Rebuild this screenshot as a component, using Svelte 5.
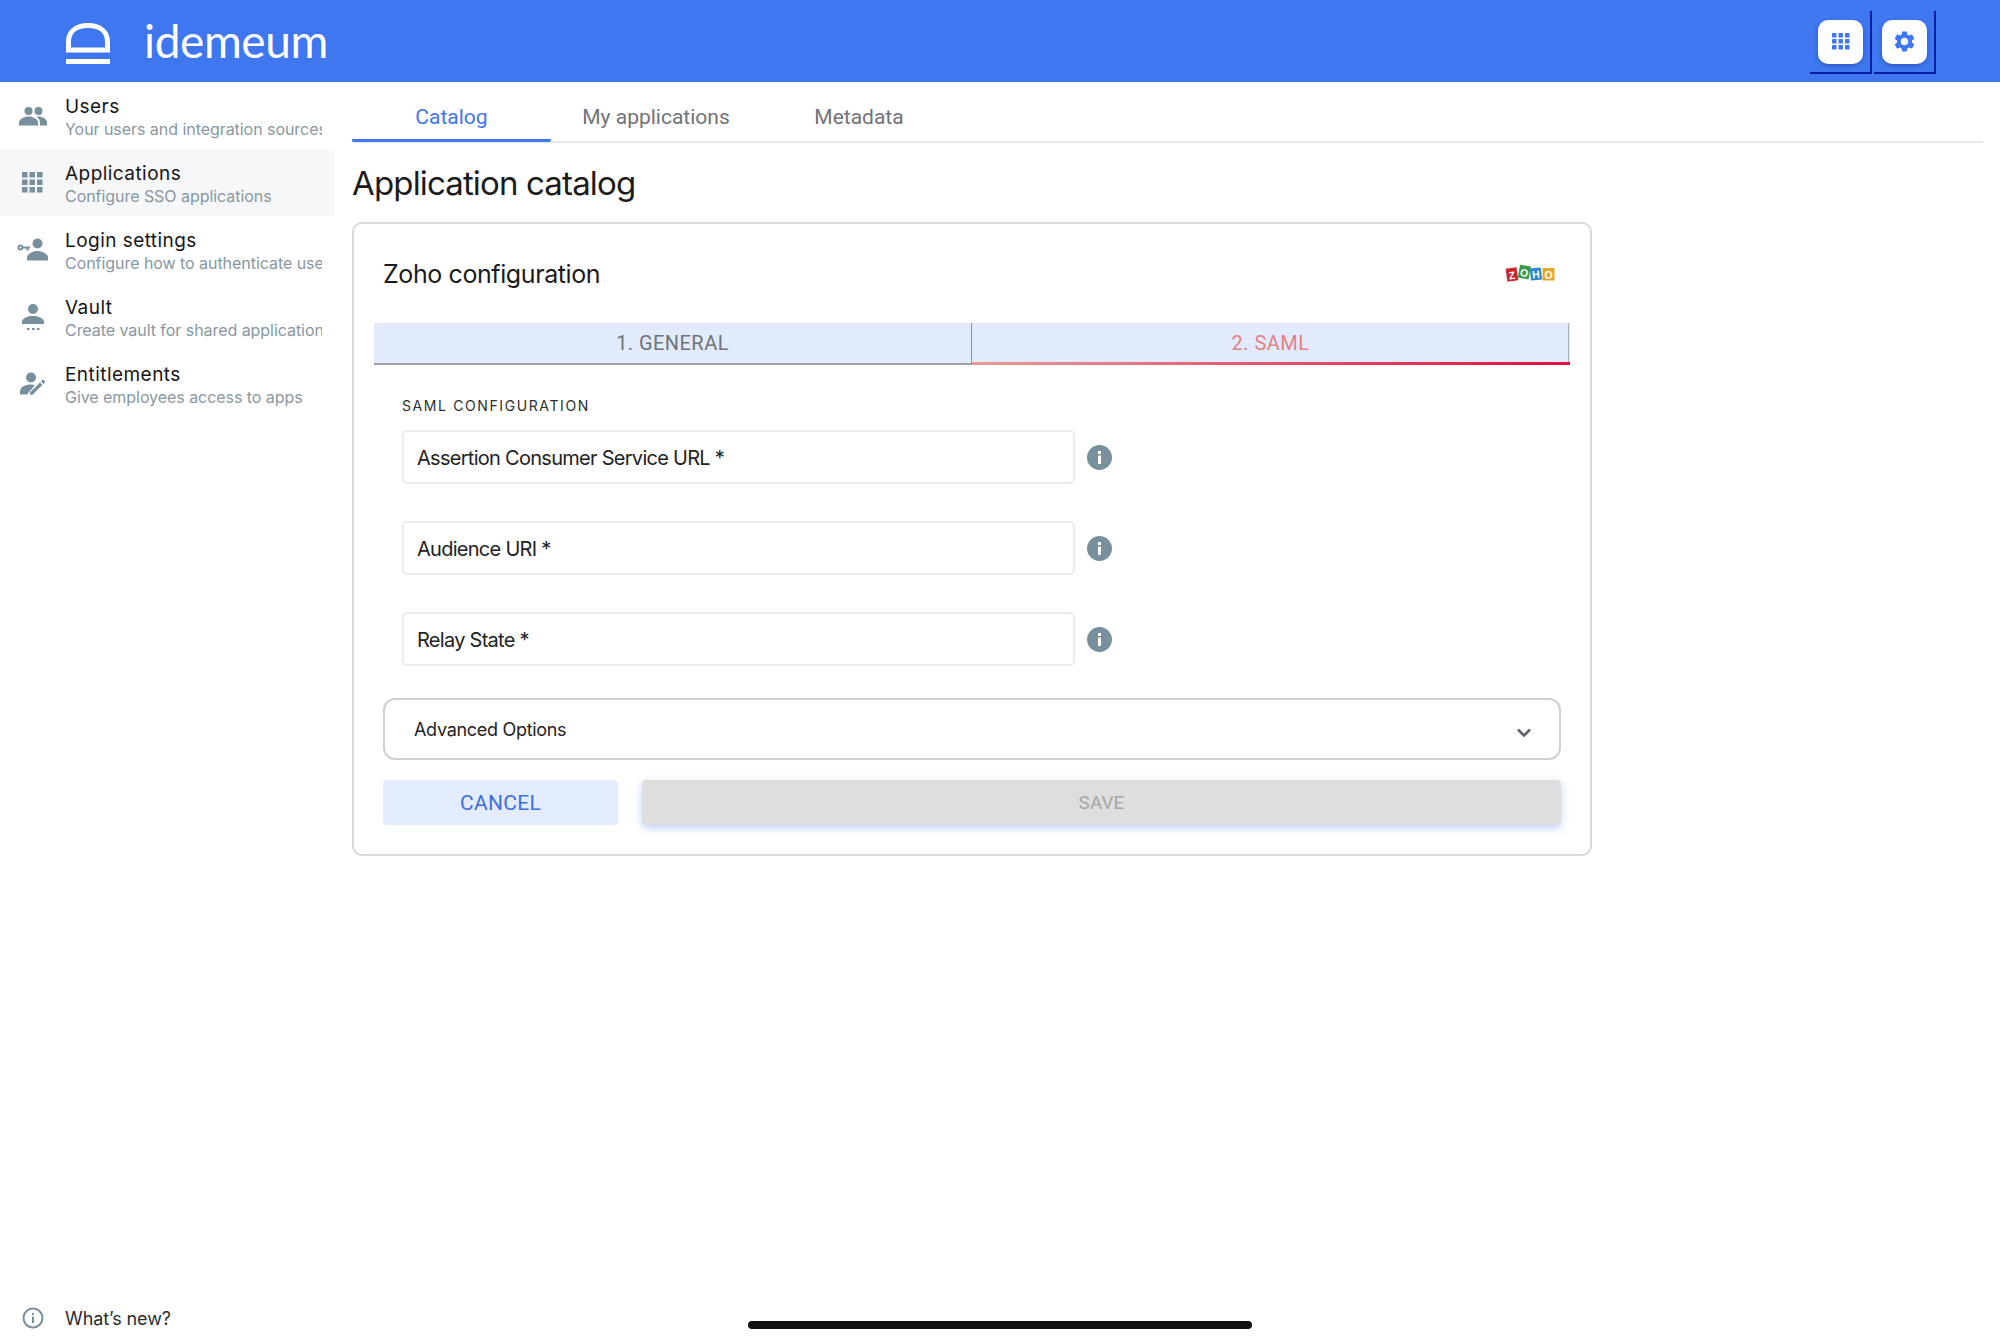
<script>
  const nav = [
    { t: 'Users', s: 'Your users and integration sources', i: 'users' },
    { t: 'Applications', s: 'Configure SSO applications', i: 'apps', active: true },
    { t: 'Login settings', s: 'Configure how to authenticate users', i: 'login' },
    { t: 'Vault', s: 'Create vault for shared applications', i: 'vault' },
    { t: 'Entitlements', s: 'Give employees access to apps', i: 'ent' }
  ];
  const fields = ['Assertion Consumer Service URL *', 'Audience URI *', 'Relay State *'];
  const grid = [4, 10, 16];
</script>

<div class="page">
  <header class="top">
    <div class="brand">
      <svg class="logo" viewBox="0 0 44 42" fill="none">
        <path d="M2.500 28V20C2.500 9.500 10 3.500 22 3.500S41.500 9.500 41.500 20V28Z" stroke="#fff" stroke-width="5"/>
        <rect x="0" y="37" width="44" height="5" fill="#fff"/>
      </svg>
      <span class="word">idemeum</span>
    </div>
    <div class="tools">
      <div class="toolwrap">
        <button class="tool" aria-label="Apps">
          <svg viewBox="0 0 18 18" width="18" height="18" fill="#3f77f0">
            {#each grid as y}{#each [0, 6.500, 13] as x}<rect x={x} y={y - 4} width="4.500" height="4.500" rx=".6"/>{/each}{/each}
          </svg>
        </button>
      </div>
      <div class="toolwrap">
        <button class="tool" aria-label="Settings">
          <svg viewBox="0 0 24 24" width="25" height="25" fill="#3f77f0"><path d="M19.140 12.940c.04-.3.060-.61.060-.94 0-.32-.020-.64-.070-.94l2.030-1.580a.49.49 0 0 0 .120-.61l-1.920-3.320a.488.488 0 0 0-.590-.220l-2.390.96c-.5-.38-1.030-.7-1.620-.94l-.36-2.540a.484.484 0 0 0-.480-.410h-3.840c-.240 0-.430.170-.470.410l-.360 2.540c-.590.240-1.130.570-1.620.940l-2.390-.960c-.220-.080-.470 0-.590.220L2.740 8.870c-.120.210-.080.470.120.610l2.030 1.580c-.050.300-.090.630-.090.940s.020.640.070.940l-2.030 1.580a.49.49 0 0 0-.120.610l1.920 3.320c.120.220.370.290.590.220l2.390-.960c.5.380 1.030.7 1.620.940l.36 2.540c.050.240.240.410.480.410h3.840c.240 0 .440-.170.470-.410l.360-2.540c.590-.240 1.130-.560 1.620-.940l2.390.96c.220.080.470 0 .590-.220l1.920-3.320c.120-.220.070-.470-.120-.610l-2.010-1.580zM12 15.600A3.610 3.610 0 0 1 8.400 12c0-1.980 1.620-3.600 3.600-3.600s3.600 1.620 3.600 3.600-1.620 3.600-3.600 3.600z"/></svg>
        </button>
      </div>
    </div>
  </header>

  <div class="body">
    <aside class="side">
      <nav>
        {#each nav as n}
          <div class="item" class:active={n.active}>
            <span class="ico">
              {#if n.i === 'users'}
                <svg viewBox="0 0 28 20" width="28" height="20" fill="#78909c"><circle cx="9.500" cy="5" r="4"/><circle cx="19.500" cy="5" r="4"/><path d="M0 19.500v-3C0 13 5.500 10.500 9.500 10.500S19 13 19 16.500v3Z"/><path d="M17.500 10.700c.8-.2 1.500-.2 2-.2 3.800 0 8.500 2.300 8.500 6v3h-7v-3c0-2.500-1.500-4.600-3.500-5.800Z"/></svg>
              {:else if n.i === 'apps'}
                <svg viewBox="0 0 21 21" width="21" height="21" fill="#78909c">
                  {#each [0, 7.500, 15] as y}{#each [0, 7.500, 15] as x}<rect x={x} y={y} width="5.500" height="5.500"/>{/each}{/each}
                </svg>
              {:else if n.i === 'login'}
                <svg viewBox="0 0 31 23" width="31" height="23" fill="#78909c"><circle cx="20.500" cy="5.500" r="5"/><path d="M10 22.500v-3c0-3.800 6.500-6.500 10.500-6.500S31 15.700 31 19.500v3Z"/><path fill-rule="evenodd" d="M3.500 6.500a3 3 0 0 1 2.800 2h6.700v2h-1.500v2h-2v-2H6.300a3 3 0 1 1-2.800-4Zm0 2a1 1 0 1 0 0 2 1 1 0 0 0 0-2Z"/></svg>
              {:else if n.i === 'vault'}
                <svg viewBox="0 0 22 26" width="22" height="26" fill="#78909c"><circle cx="11" cy="5" r="5"/><path d="M0 20v-2.500C0 14 6.500 12 11 12s11 2 11 5.500V20Z"/><rect x="5" y="24" width="2.500" height="2"/><rect x="10" y="24" width="2.500" height="2"/><rect x="15" y="24" width="2.500" height="2"/></svg>
              {:else}
                <svg viewBox="0 0 25 23" width="25" height="23" fill="#78909c"><circle cx="11" cy="5.500" r="5"/><path d="M0 22.500v-3C0 15 5.500 12.500 11 12.500c1.500 0 2.800.2 4 .5L7 22.500Z"/><path d="M10 22.800v-2.500L20 10.500l2.500 2.500L12.500 22.800ZM21 9.500l1.400-1.400a1 1 0 0 1 1.400 0l1 1a1 1 0 0 1 0 1.400L23.500 12Z"/></svg>
              {/if}
            </span>
            <div class="labels">
              <div class="t">{n.t}</div>
              <div class="s">{n.s}</div>
            </div>
          </div>
        {/each}
      </nav>
      <div class="news">
        <span class="ico">
          <svg viewBox="0 0 22 22" width="22" height="22" fill="none"><circle cx="11" cy="11" r="9.500" stroke="#78909c" stroke-width="2"/><rect x="10" y="9.500" width="2" height="6.500" fill="#78909c"/><rect x="10" y="6" width="2" height="2" fill="#78909c"/></svg>
        </span>
        <span class="newstext">What’s new?</span>
      </div>
    </aside>

    <main class="main">
      <div class="tabs">
        <div class="tab on">Catalog</div>
        <div class="tab t2">My applications</div>
        <div class="tab t3">Metadata</div>
      </div>
      <h1>Application catalog</h1>

      <section class="card">
        <div class="cardhead">
          <h2>Zoho configuration</h2>
          <svg class="zoho" viewBox="0 0 50 20" width="50" height="20" aria-label="Zoho">
            <g font-family="Liberation Sans, sans-serif" font-weight="700" font-size="10.500" fill="#fff" text-anchor="middle">
              <g transform="rotate(-8 7 11)"><rect x="1.500" y="4" width="11" height="13" fill="#c8262c"/><text x="7" y="15">Z</text></g>
              <g transform="rotate(10 19 10)"><rect x="13.500" y="1.500" width="11" height="13" fill="#3b9b4c"/><text x="19" y="12.500">O</text></g>
              <g transform="rotate(-6 31 11)"><rect x="25.500" y="4" width="11" height="12" fill="#2a86c8"/><text x="31" y="14">H</text></g>
              <g><rect x="37.500" y="4" width="12" height="12.500" fill="#e3a72f"/><text x="43.500" y="14.500">O</text></g>
            </g>
          </svg>
        </div>

        <div class="steps">
          <div class="step">1. GENERAL</div>
          <div class="step cur">2. SAML</div>
        </div>

        <div class="form">
          <div class="eyebrow">SAML CONFIGURATION</div>
          {#each fields as f}
            <div class="row">
              <div class="field">{f}</div>
              <svg class="info" viewBox="0 0 25 25" width="25" height="25"><circle cx="12.500" cy="12.500" r="12.500" fill="#78909c"/><rect x="11" y="10.500" width="3" height="8.500" fill="#fff"/><rect x="11" y="6" width="3" height="3" fill="#fff"/></svg>
            </div>
          {/each}
        </div>

        <div class="adv">
          <span>Advanced Options</span>
          <svg viewBox="0 0 14 9" width="14" height="9" fill="none"><path d="M1 1.500 7 7.500 13 1.500" stroke="#5f6368" stroke-width="2.600"/></svg>
        </div>

        <div class="actions">
          <button class="cancel">CANCEL</button>
          <button class="save">SAVE</button>
        </div>
      </section>
    </main>
  </div>

  <div class="homebar"></div>
</div>

<style>
  :global(body) { margin: 0; background: #fff; }
  .page {
    position: relative;
    width: 2000px;
    height: 1340px;
    display: flex;
    flex-direction: column;
    overflow: hidden;
    font-family: Inter, "Noto Sans", sans-serif;
    color: #151515;
  }
  .top {
    height: 82px;
    flex: none;
    background: #3f77f0;
    display: flex;
    align-items: center;
    justify-content: space-between;
    padding: 0 64px 0 66px;
  }
  .brand { display: flex; align-items: center; gap: 35px; }
  .logo { width: 44px; height: 42px; margin-top: 4px; }
  .word { color: #fff; font-size: 46px; line-height: 1; letter-spacing: -.4px; font-family: Lato, sans-serif; margin-top: -1px; margin-left: -1px; }
  .tools { display: flex; gap: 2px; margin-top: 3px; }
  .toolwrap {
    width: 62px;
    height: 63px;
    display: flex;
    align-items: center;
    justify-content: flex-end;
    padding: 0 7px 0 0;
    box-sizing: border-box;
    border-right: 2px solid #0b1fa3;
    border-bottom: 2px solid #0b1fa3;
  }
  .tool {
    width: 45px;
    height: 44px;
    border: 0;
    padding: 0;
    border-radius: 10px;
    background: #fff;
    display: flex;
    align-items: center;
    justify-content: center;
    box-shadow: 0 2px 4px rgba(0, 0, 40, .25);
    flex: none;
  }
  .body { flex: 1; display: flex; min-height: 0; }
  .side {
    width: 334px;
    flex: none;
    display: flex;
    flex-direction: column;
    justify-content: space-between;
    padding-bottom: 10px;
  }
  .item {
    height: 67px;
    display: flex;
    align-items: center;
    box-sizing: border-box;
    padding-left: 16px;
  }
  .item.active { background: #f5f7f9; }
  .ico { width: 33px; display: flex; justify-content: center; flex: none; }
  .labels { margin-left: 16px; width: 257px; overflow: hidden; margin-top: 3px; }
  .t { font-size: 19px; line-height: 23px; letter-spacing: .45px; color: #151515; white-space: nowrap; }
  .s { font-size: 16px; line-height: 22px; letter-spacing: -.05px; color: #88979f; white-space: nowrap; }
  .news { display: flex; align-items: center; padding-left: 16px; height: 24px; }
  .newstext { margin-left: 16px; font-size: 18px; letter-spacing: -.1px; color: #2b2b2b; }
  .main { flex: 1; min-width: 0; padding: 0 17px 0 18px; }
  .tabs {
    height: 59px;
    display: flex;
    border-bottom: 2px solid #e6e8ea;
    box-sizing: content-box;
  }
  .tab {
    font-size: 21px;
    color: #6f7378;
    display: flex;
    align-items: center;
    justify-content: center;
    padding-top: 10px;
    box-sizing: border-box;
    height: 60px;
    font-family: Roboto, sans-serif;
  }
  .tab.on { width: 199px; padding-top: 12px; color: #3f77f0; border-bottom: 3px solid #3f77f0; border-radius: 0 0 2px 2px; }
  .t2 { width: 210px; }
  .t3 { width: 140px; margin-left: 28px; }
  h1 {
    margin: 19px 0 0;
    font-size: 33px;
    line-height: 42px;
    font-weight: 400;
    letter-spacing: -.85px;
    color: #1b1b1b;
    font-family: Inter, sans-serif;
  }
  .card {
    width: 1240px;
    height: 634px;
    margin-top: 18px;
    box-sizing: border-box;
    border: 2px solid #d9d9d9;
    border-radius: 10px;
    padding: 0 20px;
    display: flex;
    flex-direction: column;
  }
  .cardhead {
    height: 99px;
    flex: none;
    display: flex;
    align-items: center;
    justify-content: space-between;
    padding: 0 15px 0 9px;
  }
  h2 { margin: 0; font-size: 25px; font-weight: 400; letter-spacing: -.4px; color: #1b1b1b; }
  .steps { display: flex; height: 42px; flex: none; }
  .step {
    flex: 1;
    background: #e2ebfb;
    display: flex;
    align-items: center;
    justify-content: center;
    font-size: 20px;
    color: #6f7378;
    box-sizing: border-box;
    border-right: 1px solid #8a949c;
    border-bottom: 2px solid #9aa3ac;
    font-family: Roboto, sans-serif;
    letter-spacing: .45px;
  }
  .step.cur {
    padding-top: 1px;
    color: #e57f85;
    border-bottom: 3px solid transparent;
    border-image: linear-gradient(90deg, #ea9a96, #dc0f3c) 1;
    border-image-width: 0 0 3px 0;
    box-shadow: inset -1px 0 0 #a9b1b8;
  }
  .form { padding: 0 0 0 28px; }
  .eyebrow {
    margin-top: 32px;
    font-size: 14px;
    line-height: 18px;
    letter-spacing: 1.6px;
    color: #2e2e2e;
  }
  .row { display: flex; align-items: center; margin-top: 37px; }
  .eyebrow + .row { margin-top: 15px; }
  .field {
    width: 673px;
    height: 54px;
    box-sizing: border-box;
    border: 2px solid #ececec;
    border-radius: 5px;
    display: flex;
    align-items: center;
    padding: 2px 0 0 13px;
    font-size: 20px;
    letter-spacing: -.72px;
    color: #222;
  }
  .info { margin-left: 12px; flex: none; }
  .adv {
    margin: 32px 9px 0 9px;
    height: 62px;
    box-sizing: border-box;
    border: 2px solid #d0d0d0;
    border-radius: 12px;
    display: flex;
    align-items: center;
    justify-content: space-between;
    padding: 0 28px 0 29px;
    font-size: 18px;
    letter-spacing: -.3px;
    color: #222;
    flex: none;
  }
  .adv svg { margin-top: 6px; }
  .actions { display: flex; gap: 24px; margin: 20px 9px 0; height: 45px; flex: none; }
  .cancel {
    width: 235px;
    border: 0;
    border-radius: 4px;
    background: #e2ecfd;
    color: #3f6fdc;
    font-size: 21px;
    letter-spacing: .3px;
    font-family: Roboto, sans-serif;
  }
  .save {
    flex: 1;
    border: 0;
    border-radius: 4px;
    background: #dedede;
    color: #a6a6a6;
    font-size: 19px;
    box-shadow: 0 3px 8px rgba(63, 119, 240, .35);
    font-family: Roboto, sans-serif;
  }
  .homebar {
    position: absolute;
    left: 748px;
    top: 1321px;
    width: 504px;
    height: 8px;
    border-radius: 4px;
    background: #111;
  }
</style>
